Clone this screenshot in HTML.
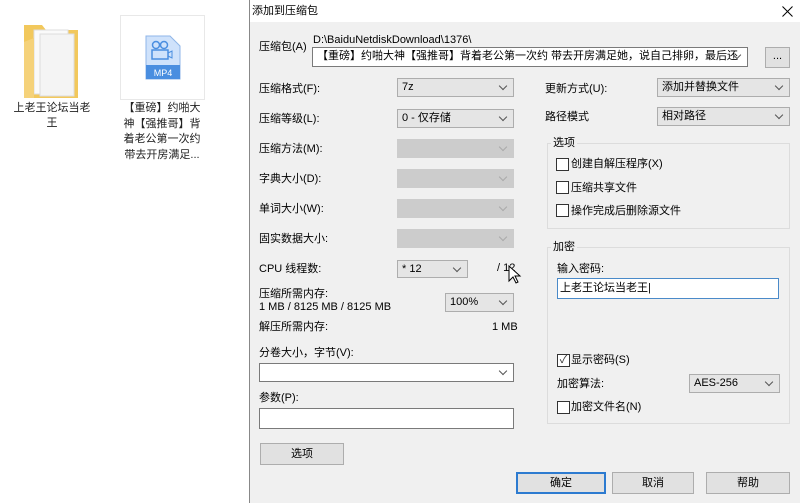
<!DOCTYPE html>
<html><head><meta charset="utf-8"><style>
*{margin:0;padding:0;box-sizing:border-box}
body{width:800px;height:503px;overflow:hidden;background:#fff;position:relative;font-family:"Liberation Sans","Noto Sans CJK SC",sans-serif;font-size:11px;color:#000}
.a{position:absolute;white-space:nowrap;line-height:14px}
.cb{position:absolute;background:#e5e5e5;border:1px solid #adadad;padding-left:4px;line-height:17px;font-size:11px}
.cb.d{background:#cccccc;border-color:#cccccc}
.cb.w{background:#fff;border-color:#7a7a7a}
.cb::after{content:"";position:absolute;right:7px;top:4px;width:5px;height:5px;border-right:1px solid #555;border-bottom:1px solid #555;transform:rotate(45deg)}
.cb.d::after{border-color:#aaa}
.btn{position:absolute;background:#e1e1e1;border:1px solid #adadad;text-align:center;line-height:21px}
.grp{position:absolute;border:1px solid #dcdcdc}
.chk{position:absolute;width:13px;height:13px;border:1px solid #333;background:#fff}
.lg{position:absolute;background:#f0f0f0;padding:0 2px;line-height:14px}
</style></head><body>
<!-- desktop -->
<svg class="a" style="left:20px;top:20px" width="62" height="80" viewBox="0 0 62 80">
<path d="M4 5h18l4 5h32v68H4z" fill="#f2c85c"/>
<rect x="14" y="10" width="34" height="64" fill="#fafafa" stroke="#ddd"/>
<rect x="20" y="14" width="34" height="62" fill="#f4f4f4" stroke="#ddd"/>
<path d="M4 22l10-4v60H4z" fill="#f5d27a"/>
</svg>
<div class="a" style="left:10px;top:101px;width:84px;text-align:center;white-space:normal;line-height:15px;color:#222">上老王论坛当老<br>王</div>
<div class="a" style="left:120px;top:15px;width:85px;height:85px;border:1px solid #e8e8e8"></div>
<svg class="a" style="left:145px;top:35px" width="36" height="45" viewBox="0 0 36 45">
<path d="M1 1h24l10 10v33H1z" fill="#cfe2fb" stroke="#8fb6e8"/>
<rect x="1" y="30" width="34" height="14" fill="#4a8ee0"/>
<text x="18" y="41" font-size="9" fill="#fff" text-anchor="middle" font-family="Liberation Sans">MP4</text>
<circle cx="11" cy="10" r="3.5" fill="none" stroke="#4a8ee0" stroke-width="1.5"/><circle cx="19" cy="10" r="3.5" fill="none" stroke="#4a8ee0" stroke-width="1.5"/>
<rect x="7" y="15" width="16" height="9" fill="none" stroke="#4a8ee0" stroke-width="1.5"/><path d="M23 18l4-2v7l-4-2" fill="none" stroke="#4a8ee0"/>
</svg>
<div class="a" style="left:112px;top:101px;width:100px;text-align:center;line-height:15.5px;color:#222">【重磅】约啪大<br>神【强推哥】背<br>着老公第一次约<br>带去开房满足...</div>
<!-- dialog -->
<div class="a" style="left:249px;top:0;width:551px;height:503px;background:#f0f0f0;border-left:1px solid #888"></div>
<div class="a" style="left:250px;top:0;width:550px;height:22px;background:#fff"></div>
<div class="a" style="left:252px;top:4px">添加到压缩包</div>
<svg class="a" style="left:782px;top:6px" width="11" height="11" viewBox="0 0 11 11"><path d="M0.5 0.5l10 10M10.5 0.5l-10 10" stroke="#000" stroke-width="1"/></svg>
<div class="a" style="left:259px;top:40px">压缩包(A)</div>
<div class="a" style="left:313px;top:33px">D:\BaiduNetdiskDownload\1376\</div>
<div class="cb w" style="left:312px;top:47px;width:436px;height:20px;overflow:hidden">【重磅】约啪大神【强推哥】背着老公第一次约 带去开房满足她，说自己排卵，最后还被</div>
<div class="btn" style="left:765px;top:47px;width:25px;height:21px;line-height:17px">...</div>

<div class="a" style="left:259px;top:82px">压缩格式(F):</div>
<div class="cb" style="left:397px;top:78px;width:117px;height:19px">7z</div>
<div class="a" style="left:259px;top:112px">压缩等级(L):</div>
<div class="cb" style="left:397px;top:109px;width:117px;height:19px">0 - 仅存储</div>
<div class="a" style="left:259px;top:142px">压缩方法(M):</div>
<div class="cb d" style="left:397px;top:139px;width:117px;height:19px"></div>
<div class="a" style="left:259px;top:172px">字典大小(D):</div>
<div class="cb d" style="left:397px;top:169px;width:117px;height:19px"></div>
<div class="a" style="left:259px;top:202px">单词大小(W):</div>
<div class="cb d" style="left:397px;top:199px;width:117px;height:19px"></div>
<div class="a" style="left:259px;top:232px">固实数据大小:</div>
<div class="cb d" style="left:397px;top:229px;width:117px;height:19px"></div>
<div class="a" style="left:259px;top:262px">CPU 线程数:</div>
<div class="cb" style="left:397px;top:260px;width:71px;height:18px">* 12</div>
<div class="a" style="left:497px;top:261px">/ 12</div>
<div class="a" style="left:259px;top:287px">压缩所需内存:</div>
<div class="a" style="left:259px;top:300px">1 MB / 8125 MB / 8125 MB</div>
<div class="cb" style="left:445px;top:293px;width:69px;height:19px">100%</div>
<div class="a" style="left:259px;top:320px">解压所需内存:</div>
<div class="a" style="left:492px;top:320px">1 MB</div>
<div class="a" style="left:259px;top:346px">分卷大小，字节(V):</div>
<div class="cb w" style="left:259px;top:363px;width:255px;height:19px"></div>
<div class="a" style="left:259px;top:391px">参数(P):</div>
<div class="a" style="left:259px;top:408px;width:255px;height:21px;background:#fff;border:1px solid #7a7a7a"></div>
<div class="btn" style="left:260px;top:443px;width:84px;height:22px">选项</div>

<div class="a" style="left:545px;top:82px">更新方式(U):</div>
<div class="cb" style="left:657px;top:78px;width:133px;height:19px">添加并替换文件</div>
<div class="a" style="left:545px;top:110px">路径模式</div>
<div class="cb" style="left:657px;top:107px;width:133px;height:19px">相对路径</div>

<div class="grp" style="left:547px;top:143px;width:243px;height:86px"></div>
<div class="lg" style="left:551px;top:136px">选项</div>
<div class="chk" style="left:556px;top:158px"></div><div class="a" style="left:571px;top:157px">创建自解压程序(X)</div>
<div class="chk" style="left:556px;top:181px"></div><div class="a" style="left:571px;top:181px">压缩共享文件</div>
<div class="chk" style="left:556px;top:204px"></div><div class="a" style="left:571px;top:204px">操作完成后删除源文件</div>

<div class="grp" style="left:547px;top:247px;width:243px;height:177px"></div>
<div class="lg" style="left:551px;top:240px">加密</div>
<div class="a" style="left:557px;top:262px">输入密码:</div>
<div class="a" style="left:557px;top:278px;width:222px;height:21px;background:#fff;border:1px solid #4a8ac9;padding-left:2px;line-height:18px">上老王论坛当老王|</div>
<div class="chk" style="left:557px;top:354px;font-size:11px;line-height:10px;text-align:center;color:#333">✓</div><div class="a" style="left:571px;top:353px">显示密码(S)</div>
<div class="a" style="left:557px;top:377px">加密算法:</div>
<div class="cb" style="left:689px;top:374px;width:91px;height:19px">AES-256</div>
<div class="chk" style="left:557px;top:401px"></div><div class="a" style="left:571px;top:400px">加密文件名(N)</div>

<div class="btn" style="left:516px;top:472px;width:90px;height:22px;border:2px solid #2d7bd0;line-height:19px">确定</div>
<div class="btn" style="left:612px;top:472px;width:82px;height:22px">取消</div>
<div class="btn" style="left:706px;top:472px;width:84px;height:22px">帮助</div>
<svg class="a" style="left:508px;top:265px" width="14" height="20" viewBox="0 0 14 20"><path d="M1 1v15l4-4 3 6 2-1-3-6h5z" fill="#fff" stroke="#000"/></svg>
</body></html>
